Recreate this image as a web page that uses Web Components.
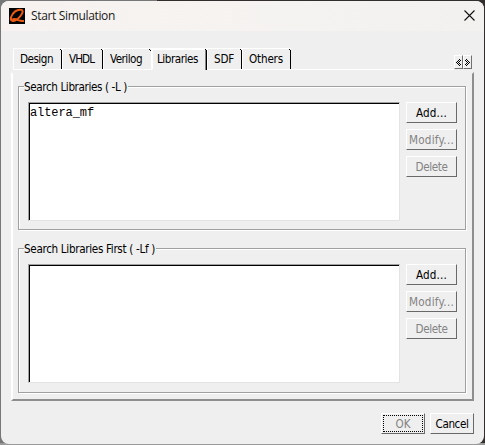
<!DOCTYPE html>
<html lang="en">
<head>
<meta charset="utf-8">
<title>Start Simulation</title>
<style>
html,body{margin:0;width:485px;height:445px;overflow:hidden}
body{background:linear-gradient(#999,#999) 0 100%/100% 2px no-repeat,linear-gradient(90deg,#777 0 157px,#332e2e 157px);font:11.600px "DejaVu Sans Condensed","DejaVu Sans",sans-serif;color:#000}
</style>
</head>
<body>
<sim-dialog></sim-dialog>
<script>
const define = (name, html, setup) => customElements.define(name, class extends HTMLElement {
  connectedCallback() {
    if (this.shadowRoot) return;
    this.attachShadow({mode: 'open'}).innerHTML = html;
    if (setup) setup(this, this.shadowRoot);
  }
});

/* A label whose tracking is set so that it spans exactly w pixels. */
define('fit-text', `<style>:host{display:inline-block;white-space:pre;flex:none}span{display:inline-block;white-space:pre}</style><span><slot></slot></span>`, (el, root) => {
  const s = root.querySelector('span'), w = +el.getAttribute('w');
  const n = el.textContent.length;
  s.style.letterSpacing = (w - s.getBoundingClientRect().width) / n + 'px';
  el.style.width = w + 'px';
});

define('title-bar', `<style>
:host{display:flex;height:30px;align-items:center;background:linear-gradient(90deg,#f7f2ef,#f5f3f1 60%,#f2f1f0);padding:0 9px 0 8px;box-sizing:border-box}
svg{display:block;flex:none}
fit-text{margin:-1px auto 0 6px;font:12px/18px "Open Sans","Noto Sans",sans-serif;color:#191919}
.x{margin-top:-1px}
</style>
<svg width="16" height="16" viewBox="0 0 16 16"><path d="M0 0h16v16H0z" fill="#000"/><path d="M12.500 1.900C8 .8 3.500 4.500 2 9.500c-1 3.500 2.500 4.500 6 2 4-3 7.500-8.800 4.500-9.600ZM3.500 11.500c3-2.500 6 2.500 11.500 1.500" fill="none" stroke="#ec5b13" stroke-width="2"/></svg>
<fit-text w="84">Start Simulation</fit-text>
<svg class="x" width="11" height="11" viewBox="0 0 11 11"><path d="M.5.5l10 10M10.500.5l-10 10" stroke="#111" stroke-width="1.100"/></svg>`);

define('tab-item', `<style>
:host{display:flex;position:relative;box-sizing:border-box;height:22px;border-top:1px solid #fff;border-left:1px solid #fff;border-bottom:1px solid #fff;padding:2px 0 0 6px;line-height:17px}
:host([selected]){border-top-width:2px;border-left-width:2px;border-bottom-color:#efefef;padding:1px 0 0 4px}
i{position:absolute;right:0;top:1px;bottom:0;width:1px;background:#000}
i::before{content:"";position:absolute;left:-1px;top:-1px;width:1px;height:1px;background:#000}
:host([selected]) i{top:0;bottom:-1px;box-shadow:-1px 0 #888}
:host([plain]) i{height:1px;bottom:auto}
</style><slot></slot><i></i>`);

define('tab-strip', `<style>
:host{display:flex;height:22px;margin-left:12px;width:459px}
.rest{flex:1;border-bottom:1px solid #fff}
.nav{display:flex;align-items:flex-end;padding-bottom:1px}
b{display:block;box-sizing:border-box;width:9px;height:14px;border:1px solid;border-color:#fff #707070 #707070 #fff}
b svg{display:block;margin:3px 0 0 1px}
</style>
<slot></slot><div class="rest"></div><div class="nav">
<b><svg width="5" height="7" viewBox="0 0 5 7" shape-rendering="crispEdges"><path d="M3 0h1v1H3zM2 1h1v1H2zM4 1h1v1H4zM1 2h1v1H1zM3 2h1v1H3zM0 3h1v1H0zM2 3h1v1H2zM1 4h1v1H1zM3 4h1v1H3zM2 5h1v1H2zM4 5h1v1H4zM3 6h1v1H3z"/></svg></b>
<b><svg width="5" height="7" viewBox="0 0 5 7" shape-rendering="crispEdges"><path transform="matrix(-1 0 0 1 5 0)" d="M3 0h1v1H3zM2 1h1v1H2zM4 1h1v1H4zM1 2h1v1H1zM3 2h1v1H3zM0 3h1v1H0zM2 3h1v1H2zM1 4h1v1H1zM3 4h1v1H3zM2 5h1v1H2zM4 5h1v1H4zM3 6h1v1H3z"/></svg></b></div>`);

define('push-button', `<style>
:host{display:flex;box-sizing:border-box;width:51px;height:21px;border:1px solid;border-color:#fff #696969 #696969 #fff;justify-content:center;line-height:20px}
:host([disabled]){color:#838383}
:host([small]){width:44px}
div{display:flex;flex:1;justify-content:center;height:19px;box-sizing:border-box}
:host([focused]) div{border:1px dotted #000;margin:1px;height:17px;line-height:16px}
</style><div><slot></slot></div>`);

define('library-group', `<style>
:host{display:flex;position:relative;box-sizing:border-box;width:448px;border:1px solid #a0a0a0;box-shadow:inset 1px 1px #fff,1px 1px #fff;padding:15px 8px 8px 9px;justify-content:space-between}
.cap{position:absolute;left:5px;top:-8px;line-height:17px;background:#efefef;padding:0 1px 0 0}
.list{box-sizing:border-box;width:372px;height:119px;background:#fff;border:1px solid;border-color:#a0a0a0 #e3e3e3 #e3e3e3 #a0a0a0;box-shadow:inset 1px 1px #000;padding:3px 0 0 1px;font:12px/14px "Courier New","Liberation Mono",monospace}
.buttons{display:flex;flex-direction:column;gap:6px}
</style>
<div class="cap"><slot name="caption"></slot></div>
<div class="list"><slot></slot></div>
<div class="buttons"><push-button><fit-text w="31">Add...</fit-text></push-button><push-button disabled><fit-text w="45">Modify...</fit-text></push-button><push-button disabled><fit-text w="32">Delete</fit-text></push-button></div>`);

define('tab-panel', `<style>
:host{display:flex;flex-direction:column;gap:18px;box-sizing:border-box;width:463px;height:329px;margin:2px 0 0 10px;border:2px solid;border-color:transparent #8e8e8e #8e8e8e #fff;padding:12px 0 0 5px}
</style><slot></slot>`);

define('sim-dialog', `<style>
:host{display:block;padding:1px;box-sizing:border-box;height:445px}
.win{display:flex;flex-direction:column;width:483px;height:443px;background:#efefef;border-radius:8px;overflow:hidden}
tab-strip{margin-top:17px}
.actions{display:flex;gap:5px;margin:12px 0 0 380px}
</style>
<div class="win">
<title-bar></title-bar>
<tab-strip>
<tab-item style="width:49px"><fit-text w="33">Design</fit-text></tab-item>
<tab-item style="width:41px"><fit-text w="25">VHDL</fit-text></tab-item>
<tab-item style="width:48px" plain><fit-text w="32">Verilog</fit-text></tab-item>
<tab-item style="width:56px" selected><fit-text w="41">Libraries</fit-text></tab-item>
<tab-item style="width:35px"><fit-text w="20">SDF</fit-text></tab-item>
<tab-item style="width:49px"><fit-text w="34">Others</fit-text></tab-item>
</tab-strip>
<tab-panel>
<library-group style="height:144px"><fit-text slot="caption" w="103">Search Libraries ( -L )</fit-text><fit-text w="64">altera_mf</fit-text></library-group>
<library-group style="height:145px"><fit-text slot="caption" w="131">Search Libraries First ( -Lf )</fit-text></library-group>
</tab-panel>
<div class="actions"><push-button small disabled focused><fit-text w="15">OK</fit-text></push-button><push-button small><fit-text w="33">Cancel</fit-text></push-button></div>
</div>`);
</script>
</body>
</html>
